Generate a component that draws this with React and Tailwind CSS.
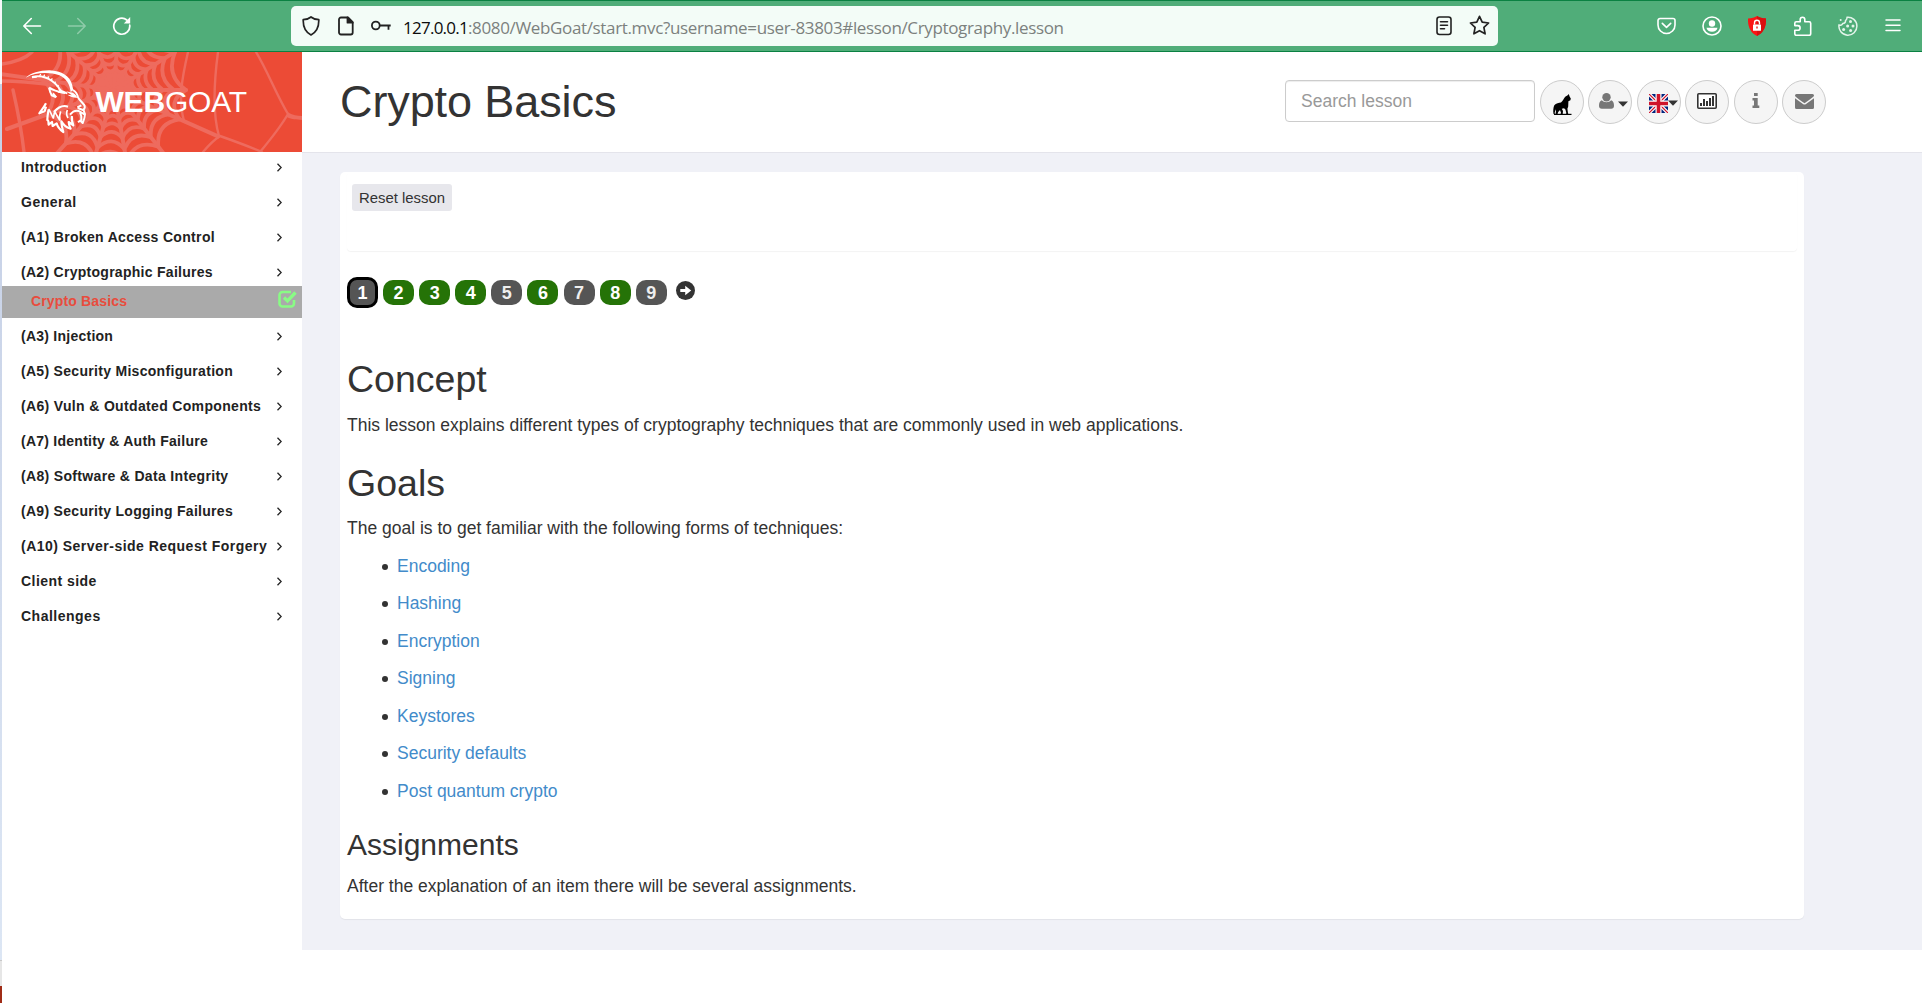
import React from "react";

const menuTop = [
  ["Introduction", "tracking-[0.35px]"],
  ["General", "tracking-[0.5px]"],
  ["(A1) Broken Access Control", "tracking-[0.33px]"],
  ["(A2) Cryptographic Failures", "tracking-[0.28px]"],
];

const menuBottom = [
  ["(A3) Injection", "tracking-[0.25px]"],
  ["(A5) Security Misconfiguration", "tracking-[0.3px]"],
  ["(A6) Vuln & Outdated Components", "tracking-[0.34px]"],
  ["(A7) Identity & Auth Failure", "tracking-[0.25px]"],
  ["(A8) Software & Data Integrity", "tracking-[0.33px]"],
  ["(A9) Security Logging Failures", "tracking-[0.3px]"],
  ["(A10) Server-side Request Forgery", "tracking-[0.48px]"],
  ["Client side", "tracking-[0.45px]"],
  ["Challenges", "tracking-[0.5px]"],
];

const pages = [
  [2, true],
  [3, true],
  [4, true],
  [5, false],
  [6, true],
  [7, false],
  [8, true],
  [9, false],
];

const topics = [
  "Encoding",
  "Hashing",
  "Encryption",
  "Signing",
  "Keystores",
  "Security defaults",
  "Post quantum crypto",
];

/* ---------- browser toolbar ---------- */

function BrowserBar() {
  return (
    <div className="flex h-[52px] items-center border-t border-b border-[#0a8142] bg-[#50ad79] pl-[20px] pr-[21px]">
      <svg className="h-5 w-5" viewBox="0 0 20 20" fill="none" stroke="#fff" strokeWidth="1.6" strokeLinecap="round" strokeLinejoin="round">
        <path d="M18.5 10H2M9.3 2.5 1.8 10l7.5 7.5" />
      </svg>
      <svg className="ml-[25px] h-5 w-5" viewBox="0 0 20 20" fill="none" stroke="#8fcba9" strokeWidth="1.5" strokeLinecap="round" strokeLinejoin="round">
        <path d="M1.5 10H18M10.7 2.5l7.5 7.5-7.5 7.5" />
      </svg>
      <svg className="ml-[25px] h-5 w-5" viewBox="0 0 20 20" fill="none" stroke="#fff" strokeWidth="1.7" strokeLinecap="round">
        <path d="M17.7 9.2A8 8 0 1 1 14.8 4" />
        <path d="M18.2 1v6.4h-6.4z" fill="#fff" stroke="none" />
      </svg>

      <div className="mb-px ml-[159px] flex h-10 w-[1207px] items-center rounded-[5px] bg-[#f3fcf7] pl-[11px] pr-[8px]">
        <svg className="h-5 w-[18px]" viewBox="0 0 18 20" fill="none" stroke="#222" strokeWidth="1.7" strokeLinejoin="round">
          <path d="M9 1C7 2.7 4.500 3.500 1.200 3.700 1 10.500 3.200 16 9 19c5.800-3 8-8.500 7.800-15.300C13.500 3.500 11 2.700 9 1Z" />
        </svg>
        <svg className="ml-[18px] h-5 w-4" viewBox="0 0 16 20" fill="none" stroke="#222" strokeWidth="1.8" strokeLinejoin="round">
          <path d="M3 1.500h7l4.700 4.700V16.500a2 2 0 0 1-2 2H3a2 2 0 0 1-2-2v-13a2 2 0 0 1 2-2Z" />
          <path d="M9.500 1.500v5.200h5.200z" fill="#222" />
        </svg>
        <svg className="ml-[17px] h-3 w-5" viewBox="0 0 20 12" fill="none" stroke="#222" strokeWidth="1.8">
          <circle cx="4.800" cy="5.500" r="3.900" />
          <path d="M8.700 5.500h11M17.500 5.500v4.200" />
        </svg>
        <div className="mt-[5px] ml-[12px] flex-1 whitespace-nowrap font-['Open_Sans',sans-serif] text-[17px] leading-6 text-[#7c817e]">
          <span className="tracking-[-0.75px] text-[#0b0b0b]">127.0.0.1</span>
          <span className="tracking-[-0.35px]">:8080/WebGoat/start.mvc?username=user-83803#lesson/Cryptography.lesson</span>
        </div>
        <svg className="h-5 w-4" viewBox="0 0 16 20" fill="none" stroke="#222" strokeWidth="1.6" strokeLinecap="round">
          <rect x="1" y="1" width="14" height="17.500" rx="2.500" />
          <path d="M4.500 5.700h7M4.500 9.200h7M4.500 12.700h4" />
        </svg>
        <svg className="ml-[17px] h-[21px] w-[21px]" viewBox="0 0 21 21" fill="none" stroke="#222" strokeWidth="1.700" strokeLinejoin="round">
          <path d="m10.500 1.300 2.700 5.900 6.400.800-4.700 4.400 1.200 6.400-5.600-3.100-5.600 3.100 1.200-6.400L1.400 8l6.400-.800z" />
        </svg>
      </div>

      <div className="ml-auto flex items-center">
        <svg className="h-[18px] w-[19px]" viewBox="0 0 19 18" fill="none" stroke="#fff" strokeWidth="1.600" strokeLinecap="round" strokeLinejoin="round">
          <path d="M3 1.500h13a2 2 0 0 1 2 2V8a8.500 8.500 0 0 1-17 0V3.500a2 2 0 0 1 2-2Z" />
          <path d="m5.300 6.300 4.200 4 4.200-4" />
        </svg>
        <svg className="ml-[26px] h-5 w-5" viewBox="0 0 20 20" fill="none" stroke="#fff" strokeWidth="1.600">
          <circle cx="10" cy="10" r="9" />
          <circle cx="10" cy="7.500" r="3.200" fill="#fff" stroke="none" />
          <path d="M4.500 11.800h11c-.400 2.500-2.700 4-5.500 4s-5.100-1.500-5.500-4Z" fill="#fff" stroke="none" />
        </svg>
        <svg className="ml-[26px] h-5 w-[18px]" viewBox="0 0 18 20">
          <path d="M9 0c2.400 1.500 5.200 2.400 9 2.500C18.400 10.500 15.500 17 9 20 2.500 17-.400 10.500 0 2.500 3.800 2.400 6.600 1.500 9 0Z" fill="#fb1414" />
          <path d="M9 0c2.400 1.500 5.200 2.400 9 2.500C18.400 10.500 15.500 17 9 20Z" fill="#d90f0f" />
          <rect x="5" y="8.500" width="8" height="6.300" rx=".6" fill="#fff" />
          <path d="M6.500 8.500V6.800a2.500 2.500 0 0 1 5 0v1.700" fill="none" stroke="#fff" strokeWidth="1.400" />
          <path d="M9 10.400v2" stroke="#e01010" strokeWidth="1.300" />
        </svg>
        <svg className="ml-[27px] h-5 w-[19px]" viewBox="0 0 19 20" fill="none" stroke="#fff" strokeWidth="1.600" strokeLinejoin="round">
          <path d="M7.200 5.700V3.500a2.300 2.300 0 0 1 4.600 0v2.200h4.400a1.500 1.500 0 0 1 1.500 1.500v10.600a1.500 1.500 0 0 1-1.500 1.500H3.300a1.500 1.500 0 0 1-1.500-1.500v-3.600h3a2.200 2.200 0 0 0 0-4.600h-3V7.200a1.500 1.500 0 0 1 1.500-1.500z" />
        </svg>
        <svg className="ml-[26px] h-5 w-5" viewBox="0 0 20 20" fill="none" stroke="#e3f4ea" strokeWidth="1.500" strokeLinejoin="round">
          <path d="M9 1.200a9 9 0 1 1-8 7.600c1.600.8 3.200.2 3.700-1.300 2-.2 3-1.200 2.800-2.900C8.700 3.700 9.200 2.500 9 1.200Z" />
          <g fill="#e3f4ea" stroke="none">
            <circle cx="12.500" cy="5.500" r="1.500" />
            <circle cx="9.600" cy="10" r="1.500" />
            <circle cx="15" cy="10" r="1.500" />
            <circle cx="5.600" cy="13.500" r="1.500" />
            <circle cx="12.600" cy="14.500" r="1.500" />
            <circle cx="2.700" cy="4" r="1" />
          </g>
        </svg>
        <svg className="ml-[27px] h-4 w-4" viewBox="0 0 16 16" stroke="#fff" strokeWidth="1.500" strokeLinecap="round">
          <path d="M1 2h14M1 7.300h14M1 12.600h14" />
        </svg>
      </div>
    </div>
  );
}

/* ---------- brand ---------- */

const webCenter = [112, 38];
const webAngles = [-172, -140, -112, -86, -60, -32, 0, 24, 52, 80, 106, 132, 160];
const webRadii = [22, 30, 39, 49, 60, 72];

function webPoint(angle, radius) {
  const a = (angle * Math.PI) / 180;
  return [webCenter[0] + radius * Math.cos(a), webCenter[1] + radius * Math.sin(a)];
}

function webRing(radius) {
  return webAngles
    .map((angle, i) => {
      const next = i === webAngles.length - 1 ? webAngles[0] + 360 : webAngles[i + 1];
      const [x1, y1] = webPoint(angle, radius);
      const [cx, cy] = webPoint((angle + next) / 2, radius * 0.74);
      const [x2, y2] = webPoint(next, radius);
      return `M${x1.toFixed(1)} ${y1.toFixed(1)}Q${cx.toFixed(1)} ${cy.toFixed(1)} ${x2.toFixed(1)} ${y2.toFixed(1)}`;
    })
    .join("");
}

function WebPattern() {
  return (
    <g fill="none" stroke="#ee6b5e" strokeLinecap="round">
      <circle cx={webCenter[0]} cy={webCenter[1]} r="19" fill="#ee6b5e" stroke="none" />
      {webAngles.map((angle) => {
        const [x, y] = webPoint(angle, angle === 0 || angle === -32 ? 72 : 114);
        return <path key={angle} d={`M${webCenter[0]} ${webCenter[1]}L${x.toFixed(1)} ${y.toFixed(1)}`} strokeWidth="4" />;
      })}
      {webRadii.map((radius) => (
        <path key={radius} d={webRing(radius)} strokeWidth="3.8" />
      ))}
      <path d="M0 12C14 10 24 6 30 0M0 29c16 0 36 2 52 4M11 38c5 22 9 44 11 62" strokeWidth="3.4" />
      <path d="M186 0c-6 26-10 48-4 69M216 0c-4 30-6 60 1 84M254 0c12 20 20 42 32 62M286 62c-8 14-18 26-28 38M218 84c-6 4-12 10-17 16M218 84c14 5 28 10 42 16" strokeWidth="2.4" />
      <path d="M285 60c6 3 10 4 15 4v4c-6-1-10 0-15-3Z" fill="#ee6b5e" stroke="none" />
    </g>
  );
}

function Goat() {
  return (
    <g transform="translate(-2 -8) scale(.33333)" fill="none" stroke="#fff" strokeLinejoin="round">
      <path d="M77 101C92 88 118 79 148 79c38 2 62 18 68 42l4 17-8 6c-2-22-14-42-34-50-30-10-70-10-101 7Z" fill="#fff" stroke="none" />
      <path d="M96 99c26-6 46 2 60 12 14 10 22 20 26 32" strokeWidth="6" />
      <path d="M119 96l3-6M131 98l3-6M143 103l3-6M153 109l4-6M162 118l5-5M170 128l6-4M176 139l8-4" strokeWidth="4" />
      <path d="M96 100l14-2M182 140c8 2 14 6 20 8" strokeWidth="6" />
      <path d="M147 131c8 6 18 8 28 12 8 2 14 4 20 4M147 131c2 10 4 16 8 23l14 6M169 160l-10-12" strokeWidth="6" />
      <path d="M198 142l20 4c8 4 12 10 14 15-10 1-20-2-30-9l14 2Z" fill="#fff" stroke="none" />
      <path d="M219 138c7 4 13 12 15 22 4 8 12 14 18 22 4 6 3 12-3 16l-16-6" strokeWidth="6" />
      <path d="M250 196l5 14c0 8-3 18-7 27l-6-6M254 212l-12-8c-10-6-22-4-32 8M240 205c4 8 6 14 4 22l-10 8M232 190l12-6" strokeWidth="6" />
      <path d="M138 178c-6 12-12 18-20 30l16-6M134 202l4-14M204 188c-16-6-30 2-42 16" strokeWidth="6.500" />
      <path d="M146 196c-2 12-4 18-4 32 6 2 2 12 4 14l10-8 2 12 12-8c2 10 8 18 20 26-4-12-6-18-6-32 8 14 16 20 28 22-4-8-6-12-6-20l14 10c-4-10-6-18-4-28" strokeWidth="6.500" />
      <path d="M146 196c6 8 8 16 14 26l4-20c6 12 10 18 16 28M180 230c-2-10-2-18 2-28M204 222c-4-6-6-14-2-24" strokeWidth="5" />
    </g>
  );
}

function Brand() {
  return (
    <div className="relative flex h-[100px] items-center bg-[#ec4b36] pl-[93.500px]">
      <svg className="absolute inset-0 h-[100px] w-[300px]" viewBox="0 0 300 100">
        <WebPattern />
        <Goat />
      </svg>
      <div className="relative text-[30px] leading-9 tracking-[-0.2px] text-white">
        <span className="font-bold">WEB</span>GOAT
      </div>
    </div>
  );
}

/* ---------- sidebar ---------- */

function MenuRow({ label, tracking, short }) {
  return (
    <div className={(short ? "h-[29px]" : "h-[35px]") + " flex items-start justify-between pl-[19px] pr-[20px] pt-[4.500px]"}>
      <span className={"whitespace-nowrap text-[14px] leading-5 font-bold text-[#222] " + tracking}>{label}</span>
      <svg className="mt-[6.500px] h-[9px] w-[5px] shrink-0" viewBox="0 0 5 9" fill="none" stroke="#222" strokeWidth="1.300">
        <path d="m.5.7 3.700 3.800L.5 8.300" />
      </svg>
    </div>
  );
}

function Sidebar() {
  return (
    <aside className="flex w-[300px] shrink-0 flex-col">
      <Brand />
      {menuTop.map(([label, tracking], i) => (
        <MenuRow key={label} label={label} tracking={tracking} short={i === 3} />
      ))}
      <div className="mb-[3px] flex h-8 items-center justify-between bg-[#aaaaaa] pl-[29px] pr-[5px]">
        <span className="mb-[2px] text-[14px] leading-5 font-bold tracking-[0.15px] text-[#e84c3d]">Crypto Basics</span>
        <svg className="mb-[6px] h-[18px] w-[19px]" viewBox="0 0 19 18" fill="none" stroke="#89fb85">
          <path d="M13 2H4.500A3 3 0 0 0 1.500 5v8.500a3 3 0 0 0 3 3h8.500a3 3 0 0 0 3-3V10" strokeWidth="2.600" />
          <path d="m6 7.500 3.500 3.500 8-8.500" strokeWidth="3.300" />
        </svg>
      </div>
      {menuBottom.map(([label, tracking]) => (
        <MenuRow key={label} label={label} tracking={tracking} />
      ))}
    </aside>
  );
}

/* ---------- header ---------- */

function RoundButton({ children }) {
  return (
    <div className="flex h-11 w-11 items-center justify-center rounded-full border border-[#cccccc] bg-[#f5f5f5]">
      {children}
    </div>
  );
}

function Caret() {
  return (
    <svg className="h-[6px] w-[10px] shrink-0" viewBox="0 0 10 6">
      <path d="M0 .5h10L5 5.700z" fill="#333" />
    </svg>
  );
}

function Header() {
  return (
    <header className="flex h-[101px] items-start border-b border-[#e4e4eb] bg-white pl-[38px]">
      <h1 className="mt-[25px] text-[45px] leading-[50px] tracking-[-0.1px] text-[#333]">Crypto Basics</h1>
      <div className="mt-7 mr-[96px] ml-auto flex items-start gap-[4.500px]">
        <div className="flex h-[42px] w-[250px] items-center rounded-[4px] border border-[#cccccc] pl-[15px] text-[17.5px] text-[#999] shadow-[inset_0_1px_1px_rgba(0,0,0,0.075)]">
          Search lesson
        </div>
        <RoundButton>
          <svg className="mt-1 ml-px h-[21px] w-[19px]" viewBox="0 0 19 21" fill="#000">
            <path d="M15.800 0l.8 2.500 1.200 2-.4 1.800-2 .9-.2 5.300-.8 2.200.7 5 1.400.6H13l.3-1.200-.9-3.600-1.400-1.200-2.200.4 1.200 2.200-.3 3.400H7.500l.5-1.500-1-2.700-1.800 2-.7 2.200H2.500l.5-3-.3-2-1 3.500.3 1.700L.5 20C0 17 .3 13.500 1.300 11.300 3 9.300 6 9 8 8.500c1.800-1.300 2.500-3.500 4-5.400 1.200-1.200 2.800-1.600 3.800-3.100Z" />
            <path d="M1 19.800h17.500v1.200H1z" />
          </svg>
        </RoundButton>
        <RoundButton>
          <svg className="mb-[3px] ml-[6px] h-4 w-[15px] shrink-0" viewBox="0 0 15 16" fill="#777">
            <path d="M2.800 7.300C3.900 8.600 5.500 9.300 7.500 9.300s3.600-.7 4.700-2c2 .6 2.800 2.800 2.800 5.500 0 2-1 3-2.800 3H2.800C1 15.800 0 14.800 0 12.800c0-2.700.8-4.900 2.800-5.500Z" />
            <circle cx="7.500" cy="4.300" r="4.200" />
          </svg>
          <span className="mt-[3px] ml-[4px]"><Caret /></span>
        </RoundButton>
        <RoundButton>
          <svg className="mt-[3px] ml-[9px] h-[19px] w-[19px] shrink-0" viewBox="0 0 19 19">
            <path d="M0 0h19v19H0z" fill="#fff" />
            <path d="M2.500 0H7v4.500zM12 0h4.500L12 4.500zM0 2.500 4.500 7H0zM19 2.500 14.500 7H19zM0 16.500 4.500 12H0zM19 16.500 14.500 12H19zM2.500 19H7v-4.500zM12 19h4.500L12 14.500z" fill="#00247d" />
            <path d="m0 0 7 7M19 0l-7 7M0 19l7-7M19 19l-7-7" stroke="#cf142b" strokeWidth="1.200" />
            <path d="M9.500 0v19M0 9.500h19" stroke="#fff" strokeWidth="6" />
            <path d="M9.500 0v19M0 9.500h19" stroke="#cf142b" strokeWidth="3.600" />
          </svg>
          <span className="mt-[2px]"><Caret /></span>
        </RoundButton>
        <RoundButton>
          <svg className="mb-[3px] h-4 w-5" viewBox="0 0 20 16">
            <rect x=".8" y=".8" width="18.400" height="14.400" rx="1" fill="#fff" stroke="#333" strokeWidth="1.600" />
            <path d="M4 10v3M7 6v7M10 8v5M13 5v8M16 3v10" stroke="#333" strokeWidth="2" />
          </svg>
        </RoundButton>
        <RoundButton>
          <svg className="mb-[3px] h-[15px] w-2" viewBox="0 0 8 15" fill="#777">
            <path d="M2 0h3.700v3H2zM.5 5h5.200v7.600h1.600V15H.5v-2.400H2V7.400H.5z" />
          </svg>
        </RoundButton>
        <RoundButton>
          <svg className="mb-[2px] h-[15px] w-[19px]" viewBox="0 0 19 15" fill="#777">
            <path d="M1.500 0h16A1.500 1.500 0 0 1 19 1.500C19 2.500 17 4 9.500 9.300 2 4 0 2.500 0 1.500A1.500 1.500 0 0 1 1.500 0Z" />
            <path d="M0 4.300 8 10c1 .7 2 .7 3 0l8-5.700v9.200a1.500 1.500 0 0 1-1.500 1.500h-16A1.500 1.500 0 0 1 0 13.500Z" />
          </svg>
        </RoundButton>
      </div>
    </header>
  );
}

/* ---------- lesson ---------- */

function Pager() {
  return (
    <div className="mt-[26px] flex h-[31px] items-center gap-[5.100px] text-[18px] font-bold text-white">
      <span className="flex h-[31px] w-[31px] items-center justify-center rounded-[10px] border-[3px] border-black bg-[#555555]">1</span>
      {pages.map(([n, solved]) => (
        <span
          key={n}
          className={"flex h-[25px] w-[31px] items-center justify-center rounded-[10px] " + (solved ? "bg-[#257307]" : "bg-[#555555] text-[#eee]")}
        >
          {n}
        </span>
      ))}
      <svg className="mb-1 ml-[4px] h-[19px] w-[19px]" viewBox="0 0 20 20">
        <circle cx="10" cy="10" r="10" fill="#333" />
        <path d="M4.500 8.300h5.200V5l6.300 5-6.300 5v-3.300H4.500z" fill="#fff" />
      </svg>
    </div>
  );
}

function Lesson() {
  return (
    <section className="mt-[19px] ml-[38px] h-[747px] w-[1464px] rounded-[5px] bg-white px-[7px] text-[17.5px] leading-[26px] text-[#333] shadow-[0_1px_1px_rgba(0,0,0,0.06)]">
      <div className="h-[79px] rounded-[4px] pt-3 pl-[5px] shadow-[0_1px_1px_rgba(0,0,0,0.05)]">
        <button className="block h-[27px] w-[100px] rounded-[3px] bg-[#e7e7ec] pt-px text-[14.9px] leading-[27px] whitespace-nowrap">Reset lesson</button>
      </div>
      <Pager />
      <h2 className="mt-[51px] text-[37.5px] leading-10">Concept</h2>
      <p className="mt-[13px]">
        This lesson explains different types of cryptography techniques that are commonly used in web applications.
      </p>
      <h2 className="mt-[25px] text-[37.5px] leading-10">Goals</h2>
      <p className="mt-[12px]">The goal is to get familiar with the following forms of techniques:</p>
      <ul className="mt-[12px]">
        {topics.map((t) => (
          <li key={t} className="flex h-[37.45px] items-start pl-[35px]">
            <span className="mt-[11px] h-[6px] w-[6px] rounded-full bg-[#333]" />
            <a className="ml-[9px] text-[#428bca]">{t}</a>
          </li>
        ))}
      </ul>
      <h3 className="mt-[13px] text-[30px] leading-[34px]">Assignments</h3>
      <p className="mt-[11px]">After the explanation of an item there will be several assignments.</p>
    </section>
  );
}

export default function App() {
  return (
    <div className="flex h-[1003px] w-[1922px] overflow-hidden bg-white font-['Liberation_Sans',Arial,sans-serif]">
      <div className="flex w-[2px] shrink-0 flex-col">
        <div className="h-[84px] bg-[#f7f8fa]" />
        <div className="flex-1 bg-linear-to-b from-[#c5cfe5] to-[#dce6f4]" />
        <div className="h-[26px] border-t border-[#c8c8c8] bg-[#e6e6e6]" />
        <div className="h-[17px] bg-[#a02c17]" />
      </div>
      <div className="flex flex-1 flex-col">
        <BrowserBar />
        <div className="flex flex-1">
          <Sidebar />
          <main className="h-[898px] flex-1 bg-[#f0f1f7]">
            <Header />
            <Lesson />
          </main>
        </div>
      </div>
    </div>
  );
}
